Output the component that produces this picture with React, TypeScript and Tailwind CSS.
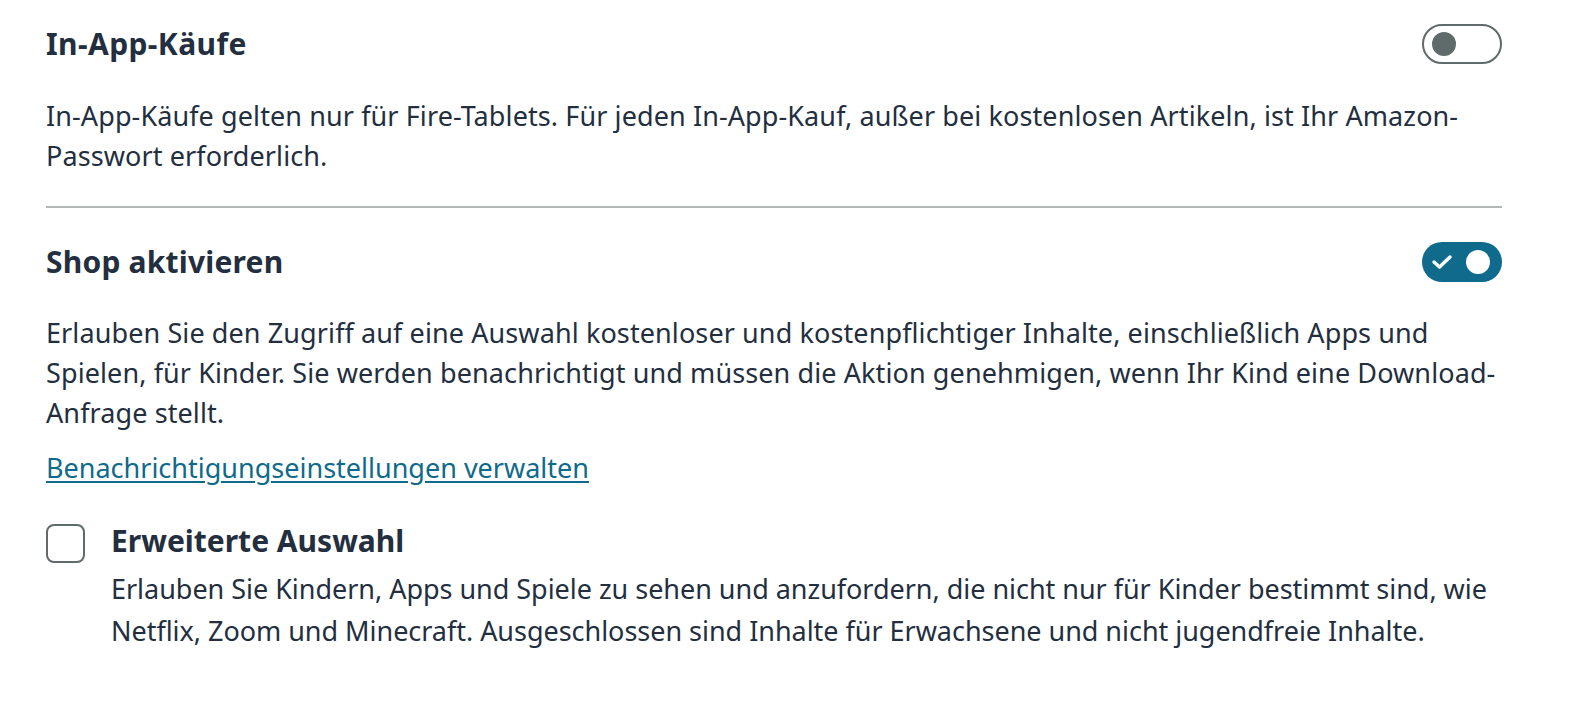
import React, { useState } from "react";

const font = { fontFamily: '"Noto Sans", "Open Sans", Arial, sans-serif' };

function Toggle({ on, onChange }: { on: boolean; onChange: () => void }) {
  return (
    <button
      type="button"
      onClick={onChange}
      className={
        on
          ? "relative flex h-[40px] w-[80px] shrink-0 items-center rounded-full bg-[#0f6a8b]"
          : "relative flex h-[40px] w-[80px] shrink-0 items-center rounded-full border-2 border-[#5f6b6a] bg-white"
      }
    >
      {on ? (
        <>
          <svg className="absolute left-[9px] top-[12px]" width="22" height="16" viewBox="0 0 22 16" fill="none">
            <path d="M3 8 L8.5 13 L19 3" stroke="white" strokeWidth="3.5" strokeLinecap="round" strokeLinejoin="round" />
          </svg>
          <span className="absolute right-[12px] top-[8px] h-[24px] w-[24px] rounded-full bg-white" />
        </>
      ) : (
        <span className="absolute left-[8px] top-[6px] h-[24px] w-[24px] rounded-full bg-[#5f6b6a]" />
      )}
    </button>
  );
}

export default function App() {
  const [inApp, setInApp] = useState(false);
  const [shop, setShop] = useState(true);
  const [extended, setExtended] = useState(false);

  return (
    <div className="min-h-screen bg-white text-[#232f3e]" style={font}>
      <div className="px-[46px] pt-[24px] pr-[74px]">
        <div className="flex items-center justify-between">
          <h2 className="text-[30px] font-bold leading-[36px] tracking-[0.4px]">In-App-Käufe</h2>
          <Toggle on={inApp} onChange={() => setInApp(!inApp)} />
        </div>
        <p className="mt-[32px] text-[27px] leading-[40px] tracking-[0.1px]">
          In-App-Käufe gelten nur für Fire-Tablets. Für jeden In-App-Kauf, außer bei kostenlosen Artikeln, ist Ihr Amazon-
          <br />
          Passwort erforderlich.
        </p>

        <div className="mt-[30px] h-[2px] bg-[#b4b9b8]" />

        <div className="mt-[34px] flex items-center justify-between">
          <h2 className="text-[30px] font-bold leading-[36px] tracking-[0.2px]">Shop aktivieren</h2>
          <Toggle on={shop} onChange={() => setShop(!shop)} />
        </div>
        <p className="mt-[31px] text-[27px] leading-[40px] tracking-[0.1px]">
          Erlauben Sie den Zugriff auf eine Auswahl kostenloser und kostenpflichtiger Inhalte, einschließlich Apps und
          <br />
          Spielen, für Kinder. Sie werden benachrichtigt und müssen die Aktion genehmigen, wenn Ihr Kind eine Download-
          <br />
          Anfrage stellt.
        </p>
        <a href="#" className="mt-[15px] block w-fit text-[27px] leading-[40px] text-[#0f6a8b] underline underline-offset-[3px]">
          Benachrichtigungseinstellungen verwalten
        </a>

        <div className="mt-[35px] flex gap-[26px]">
          <button
            type="button"
            onClick={() => setExtended(!extended)}
            className="mt-[1px] h-[39px] w-[39px] shrink-0 rounded-[8px] border-2 border-[#5f6b6a] bg-white"
          />
          <div>
            <h3 className="text-[30px] font-bold leading-[36px]">Erweiterte Auswahl</h3>
            <p className="mt-[9px] text-[27px] leading-[42px] tracking-[-0.03px]">
              Erlauben Sie Kindern, Apps und Spiele zu sehen und anzufordern, die nicht nur für Kinder bestimmt sind, wie
              <br />
              Netflix, Zoom und Minecraft. Ausgeschlossen sind Inhalte für Erwachsene und nicht jugendfreie Inhalte.
            </p>
          </div>
        </div>
      </div>
    </div>
  );
}
